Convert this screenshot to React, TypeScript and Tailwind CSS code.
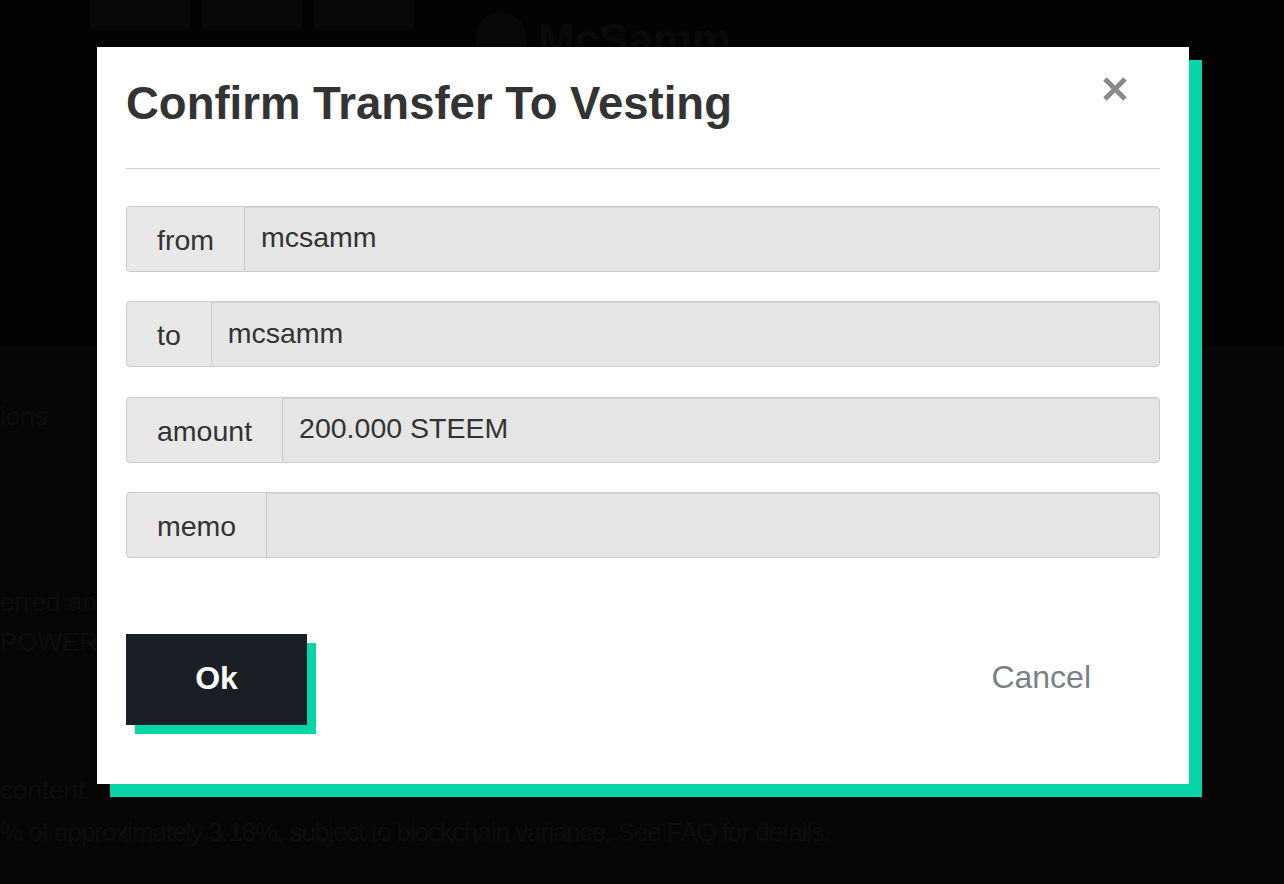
const fields = [
  { label: "from", value: "mcsamm" },
  { label: "to", value: "mcsamm" },
  { label: "amount", value: "200.000 STEEM" },
  { label: "memo", value: "" },
];

const Backdrop = () => (
  <div className="min-h-[884px] bg-[#060606] text-[#0d0d0d] font-['Liberation_Sans',Arial,sans-serif]">
    <div className="h-[347px] bg-[#030303]">
      <div className="flex items-start gap-3 pl-[90px]">
        <div className="h-[30px] w-[100px] bg-[#080808]" />
        <div className="h-[30px] w-[100px] bg-[#080808]" />
        <div className="h-[30px] w-[100px] bg-[#080808]" />
        <div className="ml-[50px] mt-[12px] h-[40px] w-[50px] rounded-t-full bg-[#080808]" />
        <div className="mt-[18px] text-[44px] font-bold leading-none text-[#0a0a0a]">McSamm</div>
      </div>
    </div>
    <div className="flex flex-col text-[26px] leading-none">
      <div className="mt-[56px]">ions</div>
      <div className="mt-[160px]">erred and</div>
      <div className="mt-[14px]">POWER</div>
      <div className="mt-[122px]">content</div>
      <div className="mt-[16px] tracking-[-0.04em]">
        % of approximately 3.18%, subject to blockchain variance. See FAQ for details.
      </div>
    </div>
  </div>
);

const App = () => {
  return (
    <div className="relative h-[884px] w-full overflow-hidden">
      <Backdrop />

      <div className="absolute inset-0">
        <div className="ml-[97px] mt-[47px] flex h-[737px] w-[1092px] flex-col bg-white px-[29px] pt-[34px] shadow-[13px_13px_0_0_#06d5a8] font-['Liberation_Sans',Arial,sans-serif]">
          <div className="relative">
            <h2 className="text-[45.5px] font-bold leading-none text-[#333]">Confirm Transfer To Vesting</h2>
            <button className="absolute right-[32px] top-[-5px] p-0">
              <svg width="26" height="26" viewBox="0 0 26 26">
                <path d="M3 3 L23 23 M23 3 L3 23" stroke="#8a8a8a" strokeWidth="5" />
              </svg>
            </button>
          </div>

          <div className="mt-[41px] h-px bg-[#cfcfcf]" />

          <div className="mt-[37px] flex flex-col gap-[29.5px]">
            {fields.map((f) => (
              <div key={f.label} className="flex h-[66px] text-[28.5px] text-[#333]">
                <div className="flex items-center rounded-l-[4px] border border-[#cbcbcb] bg-[#e8e8e8] px-[30px] pt-[3px]">
                  {f.label}
                </div>
                <div className="-ml-px flex flex-1 items-center rounded-r-[4px] border border-[#cbcbcb] bg-[#e5e5e5] px-[16px] pb-[2px] shadow-[inset_0_1px_1px_rgba(0,0,0,0.075)]">
                  {f.value}
                </div>
              </div>
            ))}
          </div>

          <div className="mt-[76px] flex items-center justify-between">
            <button className="flex h-[91px] w-[181px] items-center justify-center bg-[#191f25] pb-[4px] text-[32px] font-bold text-white shadow-[9px_9px_0_0_#06d5a8]">
              Ok
            </button>
            <button className="mr-[69px] pb-[5px] text-[32px] text-[#788188]">Cancel</button>
          </div>
        </div>
      </div>
    </div>
  );
};

export default App;
